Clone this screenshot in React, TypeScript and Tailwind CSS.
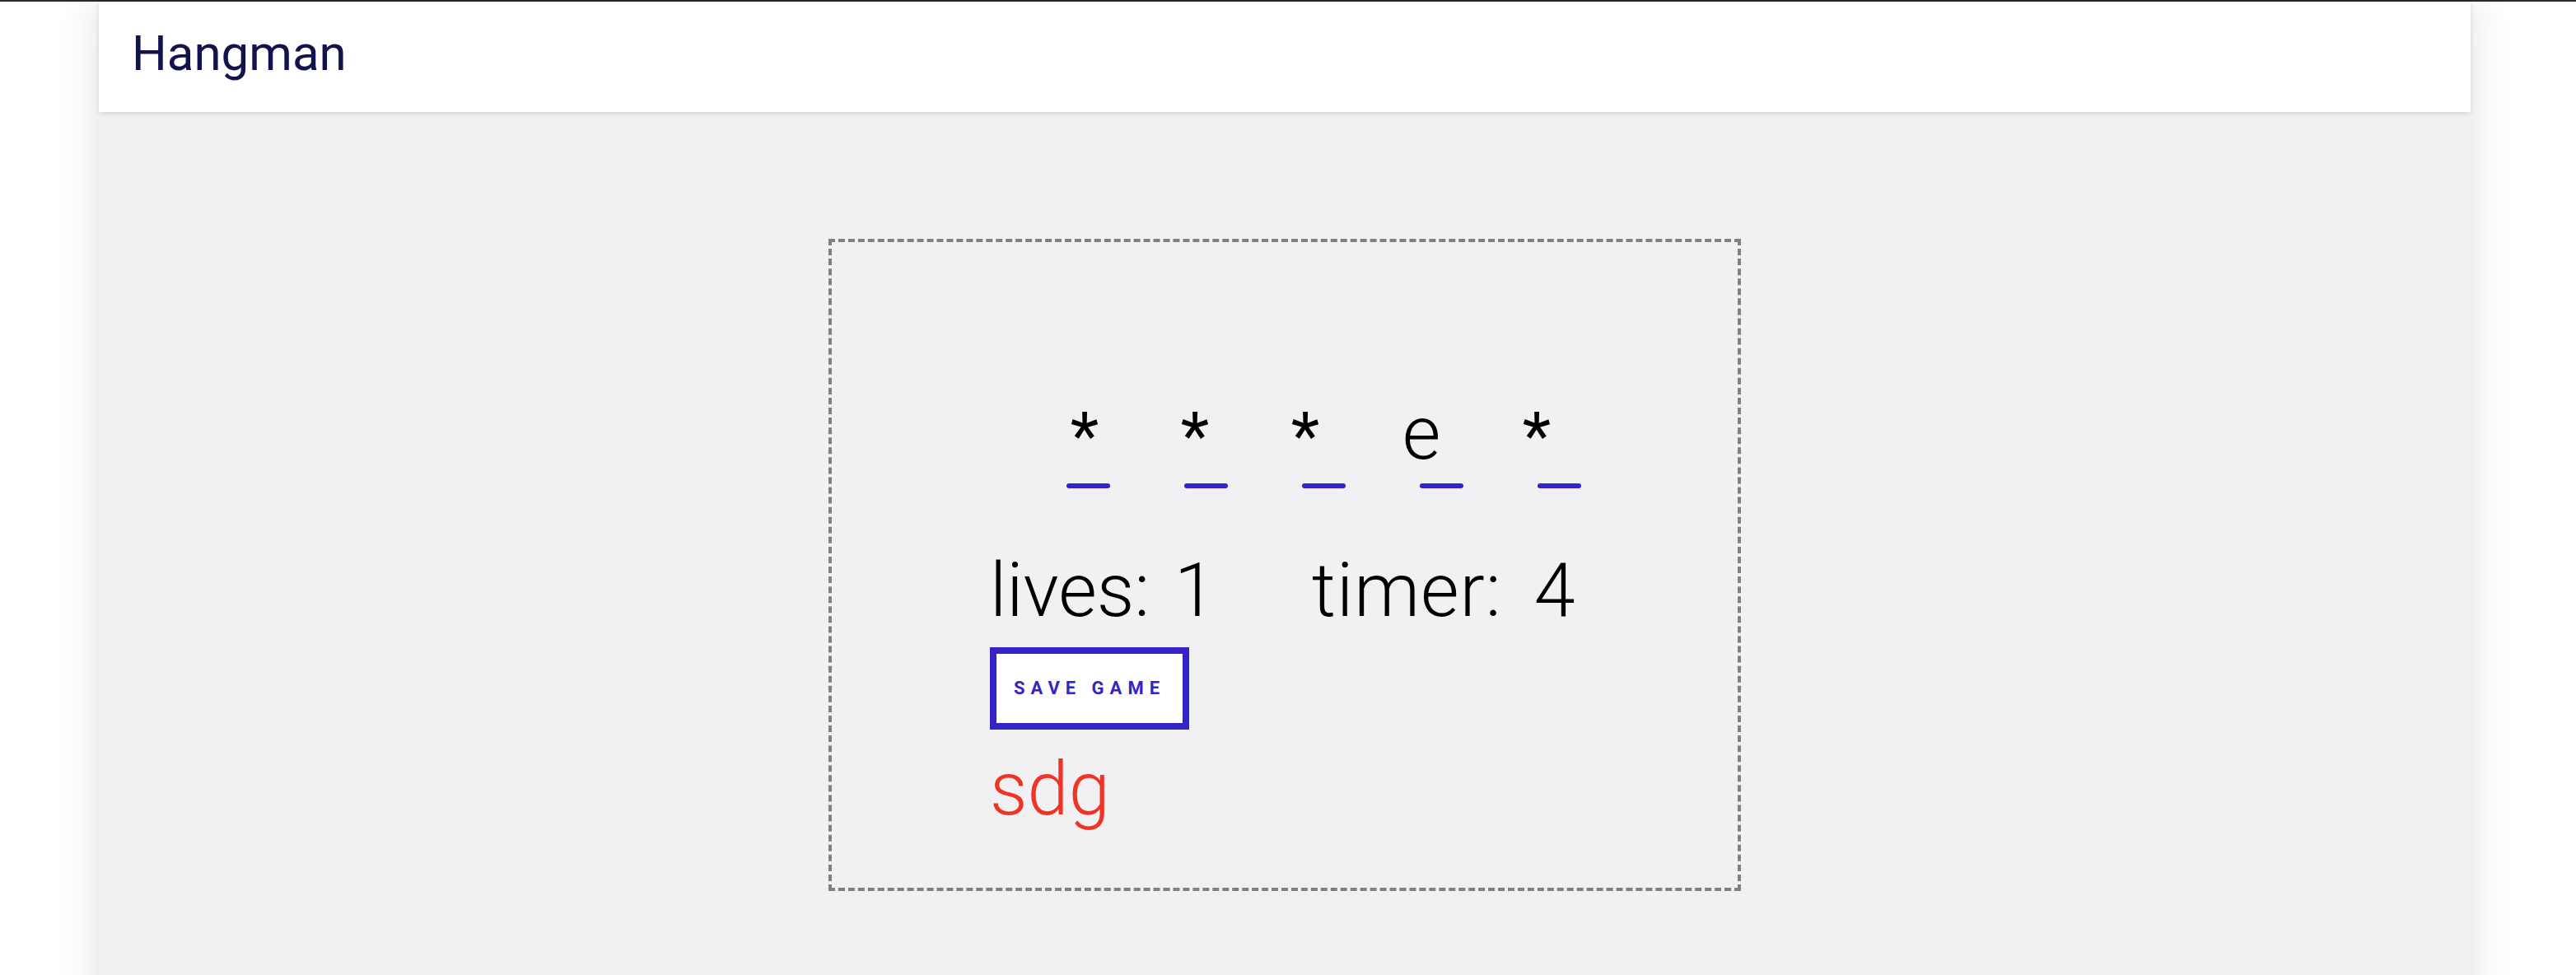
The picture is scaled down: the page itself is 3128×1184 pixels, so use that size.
const letters = ["*", "*", "*", "e", "*"];

// left offset of each letter cell inside the word row
const letterOffsets = ["ml-[95px]", "ml-[94px]", "ml-[94px]", "ml-[101px]", "ml-[100px]"];

export default function App() {
  return (
    <div className="h-screen overflow-hidden flex flex-col bg-white font-[Roboto,sans-serif]">
      <div className="h-[2px] shrink-0 bg-[#2a2a2a]" />
      <div className="shrink-0 h-[1300px] ml-[120px] w-[2880px] bg-[#f1f1f3] shadow-[0_0_50px_rgba(0,0,0,0.12)] flex flex-col">
        <header className="h-[134px] bg-white shadow-[0_2px_6px_rgba(0,0,0,0.12)] pl-[40px] pt-[33px]">
          <h1 className="text-[60px] leading-none text-[#12124d]">Hangman</h1>
        </header>

        <main className="mt-[154px] mx-auto w-[1108px] h-[792px] border-4 border-dashed border-[#808080] pl-[192px] pt-[188px]">
          <div className="flex text-[90px] leading-none font-light text-black">
            {letters.map((ch, i) => (
              <span
                key={i}
                className={`w-[40px] flex justify-center ${letterOffsets[i]} ${
                  ch === "*" ? "font-normal text-[80px] mt-[8px] h-[82px]" : ""
                }`}
              >
                {ch}
              </span>
            ))}
          </div>

          <div className="flex gap-[90px] ml-[93px] mt-[15px]">
            {letters.map((_, i) => (
              <div key={i} className="w-[53px] h-[6px] rounded-full bg-[#3423c7]" />
            ))}
          </div>

          <div className="flex mt-[80px] text-[90px] leading-none font-light text-black [word-spacing:8px]">
            <span className="w-[391px]">lives: 1</span>
            <span className="tracking-[1px] [word-spacing:16px]">timer: 4</span>
          </div>

          <button className="mt-[23px] w-[242px] h-[100px] border-8 border-[#3423c7] bg-white flex items-center justify-center">
            <span className="text-[22px] font-bold tracking-[7px] text-[#3423c7] leading-none">
              SAVE GAME
            </span>
          </button>

          <div className="mt-[28px] text-[90px] leading-none font-light text-[#ef3426]">sdg</div>
        </main>
      </div>
    </div>
  );
}
